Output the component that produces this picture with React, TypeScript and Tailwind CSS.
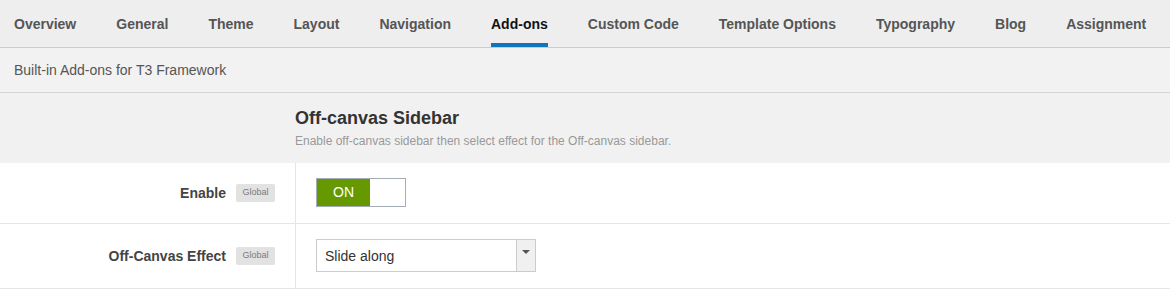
const tabs = [
  'Overview',
  'General',
  'Theme',
  'Layout',
  'Navigation',
  'Add-ons',
  'Custom Code',
  'Template Options',
  'Typography',
  'Blog',
  'Assignment',
];

const GlobalBadge = () => (
  <span className="inline-flex h-[18px] w-[39px] items-center justify-center rounded-[2px] bg-[#e2e2e2] text-[9px] text-[#7a7a7a]">
    Global
  </span>
);

const App = () => {
  return (
    <div className="w-full bg-white font-['Liberation_Sans',Arial,sans-serif]">
      <div className="flex h-[48px] gap-10 border-b border-[#cccccc] bg-[#eeeeee] pl-[14px]">
        {tabs.map((t) => (
          <div
            key={t}
            className={`relative flex items-center pt-[2px] text-[14px] font-bold ${
              t === 'Add-ons' ? 'text-[#111111]' : 'text-[#555555]'
            }`}
          >
            {t}
            {t === 'Add-ons' && (
              <span className="absolute bottom-0 left-0 right-0 h-[4px] bg-[#0f76bb]" />
            )}
          </div>
        ))}
      </div>

      <div className="flex h-[45px] items-center border-b border-[#d4d4d4] bg-[#f2f2f2] pl-[14px] text-[14px] text-[#555555]">
        Built-in Add-ons for T3 Framework
      </div>

      <div className="flex h-[70px] flex-col bg-[#f1f1f1] pl-[295px] pt-[14px]">
        <h2 className="text-[18px] font-bold leading-[22px] text-[#333333]">Off-canvas Sidebar</h2>
        <p className="mt-[5px] text-[12px] leading-[14px] text-[#999999]">
          Enable off-canvas sidebar then select effect for the Off-canvas sidebar.
        </p>
      </div>

      <div className="flex h-[61px] border-b border-[#e5e5e5]">
        <div className="flex w-[296px] items-center justify-end gap-[10px] border-r border-[#e5e5e5] pr-[20px]">
          <span className="text-[14px] font-bold text-[#444444]">Enable</span>
          <GlobalBadge />
        </div>
        <div className="flex items-start pl-[20px] pt-[15px]">
          <div className="flex h-[29px] w-[90px] border border-[#a3acb7]">
            <div className="flex w-[53px] items-center justify-center bg-[#669900] text-[14px] text-white">
              ON
            </div>
            <div className="flex-1 bg-white" />
          </div>
        </div>
      </div>

      <div className="flex h-[65px] border-b border-[#e5e5e5]">
        <div className="flex w-[296px] items-center justify-end gap-[10px] border-r border-[#e5e5e5] pr-[20px]">
          <span className="text-[14px] font-bold text-[#444444]">Off-Canvas Effect</span>
          <GlobalBadge />
        </div>
        <div className="flex items-start pl-[20px] pt-[15px]">
          <div className="flex h-[33px] w-[220px] border border-[#cccccc] bg-white">
            <div className="flex flex-1 items-center pl-[8px] pt-[1px] text-[14px] text-[#333333]">Slide along</div>
            <div className="flex w-[19px] justify-center border-l border-[#cccccc] bg-[#f0f0f0] pt-[10px]">
              <svg width="8" height="4" viewBox="0 0 8 4">
                <path d="M0 0 L8 0 L4 4 Z" fill="#555555" />
              </svg>
            </div>
          </div>
        </div>
      </div>
    </div>
  );
};

export default App;
